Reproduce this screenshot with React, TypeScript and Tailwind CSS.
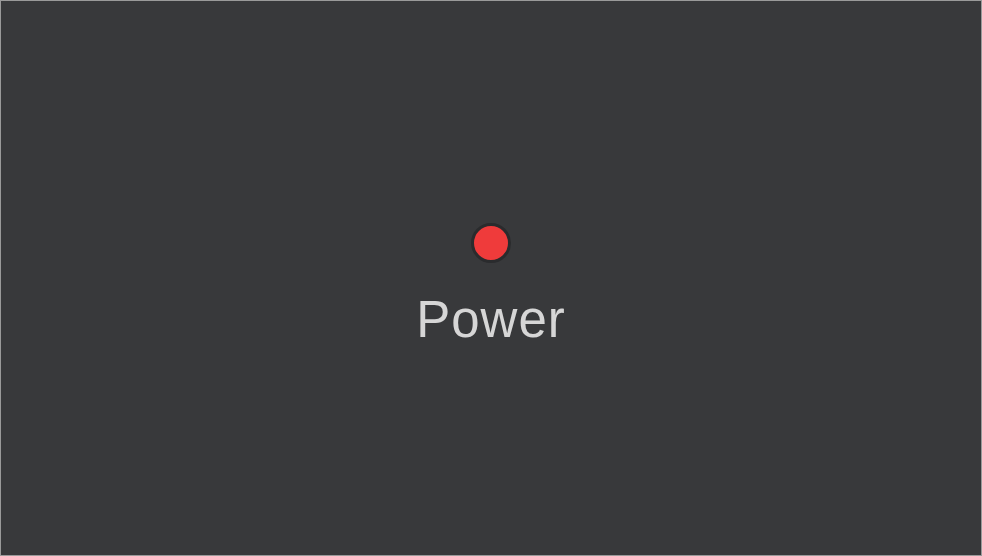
export default function App() {
  return (
    <div className="w-[982px] h-[556px] border border-[#9a9a9a] bg-[#38393b] flex flex-col items-center pt-[222px]" style={{ fontFamily: '"Liberation Sans", Arial, sans-serif' }}>
      <div className="w-[40px] h-[40px] rounded-full bg-[#ef3b3b] border-[3px] border-[#2a2b2d]" />
      <div className="mt-[31px] text-[51px] leading-[51px] text-[#d6d6d6] tracking-[1px]">Power</div>
    </div>
  );
}
